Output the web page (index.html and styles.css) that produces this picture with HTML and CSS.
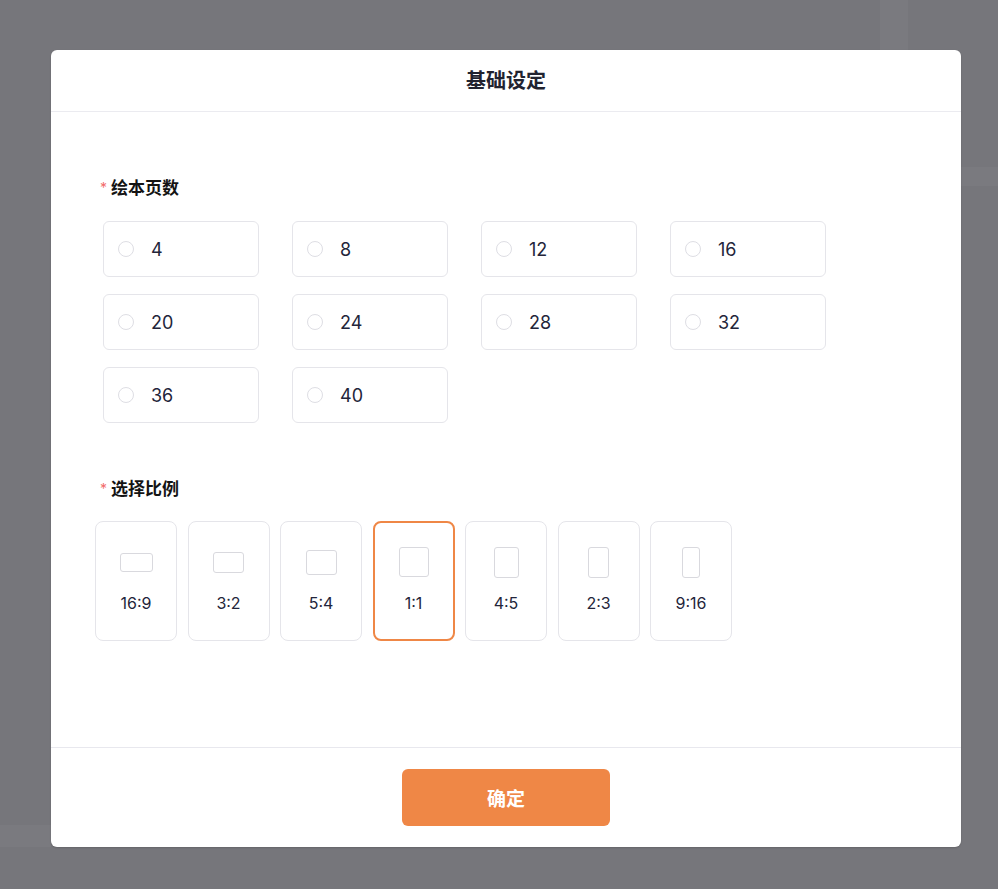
FILE: index.html
```html
<!DOCTYPE html>
<html lang="zh-CN">
<head>
    <meta charset="UTF-8">
    <title>基础设定</title>
    <link rel="stylesheet" href="styles.css">
</head>
<body>
    <div class="backdrop">
        <div class="ghost ghost-top"></div>
        <div class="ghost ghost-side"></div>
        <div class="ghost ghost-bottom"></div>
    </div>

    <div class="mask">
        <div class="dialog">
            <div class="dialog-header">基础设定</div>

            <div class="dialog-body">
                <div class="field">
                    <div class="field-label"><span class="required">*</span>绘本页数</div>
                    <div class="page-options">
                        <label class="page-option"><span class="radio"></span><span class="page-num">4</span></label>
                        <label class="page-option"><span class="radio"></span><span class="page-num">8</span></label>
                        <label class="page-option"><span class="radio"></span><span class="page-num">12</span></label>
                        <label class="page-option"><span class="radio"></span><span class="page-num">16</span></label>
                        <label class="page-option"><span class="radio"></span><span class="page-num">20</span></label>
                        <label class="page-option"><span class="radio"></span><span class="page-num">24</span></label>
                        <label class="page-option"><span class="radio"></span><span class="page-num">28</span></label>
                        <label class="page-option"><span class="radio"></span><span class="page-num">32</span></label>
                        <label class="page-option"><span class="radio"></span><span class="page-num">36</span></label>
                        <label class="page-option"><span class="radio"></span><span class="page-num">40</span></label>
                    </div>
                </div>

                <div class="field field-ratio">
                    <div class="field-label"><span class="required">*</span>选择比例</div>
                    <div class="ratio-options">
                        <div class="ratio-card">
                            <div class="ratio-frame"><span class="ratio-shape r16x9"></span></div>
                            <div class="ratio-text">16:9</div>
                        </div>
                        <div class="ratio-card">
                            <div class="ratio-frame"><span class="ratio-shape r3x2"></span></div>
                            <div class="ratio-text">3:2</div>
                        </div>
                        <div class="ratio-card">
                            <div class="ratio-frame"><span class="ratio-shape r5x4"></span></div>
                            <div class="ratio-text">5:4</div>
                        </div>
                        <div class="ratio-card selected">
                            <div class="ratio-frame"><span class="ratio-shape r1x1"></span></div>
                            <div class="ratio-text">1:1</div>
                        </div>
                        <div class="ratio-card">
                            <div class="ratio-frame"><span class="ratio-shape r4x5"></span></div>
                            <div class="ratio-text">4:5</div>
                        </div>
                        <div class="ratio-card">
                            <div class="ratio-frame"><span class="ratio-shape r2x3"></span></div>
                            <div class="ratio-text">2:3</div>
                        </div>
                        <div class="ratio-card">
                            <div class="ratio-frame"><span class="ratio-shape r9x16"></span></div>
                            <div class="ratio-text">9:16</div>
                        </div>
                    </div>
                </div>
            </div>

            <div class="dialog-footer">
                <button class="confirm-button" type="button">确定</button>
            </div>
        </div>
    </div>
</body>
</html>
```

FILE: styles.css
```css
html, body {
    margin: 0;
    height: 100%;
}
body {
    background: #fff;
    font-family: Inter, "Noto Sans CJK SC", sans-serif;
    color: #1f202c;
}

/* page underneath the mask */
.backdrop {
    position: fixed;
    top: 0;
    left: 0;
    bottom: 0;
    right: 4px;
    background: #76767b;
}
.ghost {
    position: absolute;
    background: #7a7a7f;
}
.ghost-top {
    left: 880px;
    top: 0;
    width: 28px;
    height: 50px;
}
.ghost-side {
    left: 961px;
    right: 0;
    top: 167px;
    height: 19px;
}
.ghost-bottom {
    left: 0;
    top: 825px;
    width: 51px;
    height: 22px;
}

.mask {
    position: fixed;
    top: 0;
    left: 0;
    bottom: 0;
    right: 4px;
    padding: 50px 0 0 51px;
    box-sizing: border-box;
}
.dialog {
    width: 910px;
    background: #fff;
    border-radius: 6px;
    box-shadow: 0 1px 2px rgba(0, 0, 0, 0.15);
}
.dialog-header {
    height: 62px;
    padding-top: 2px;
    box-sizing: border-box;
    line-height: 59px;
    text-align: center;
    font-size: 20px;
    font-weight: 600;
    color: #222330;
    border-bottom: 1px solid #ebebf0;
}

.dialog-body {
    padding: 65px 49px 106px;
}
.field-label {
    font-size: 17px;
    font-weight: 600;
    line-height: 22px;
    color: #141414;
}
.required {
    color: #f26b6b;
    font-size: 14px;
    font-weight: 400;
    margin-right: 4px;
    vertical-align: 1px;
}

.page-options {
    display: grid;
    grid-template-columns: repeat(4, 156px);
    column-gap: 33px;
    row-gap: 17px;
    margin: 22px 0 0 3px;
}
.page-option {
    display: flex;
    align-items: center;
    height: 56px;
    padding-left: 14px;
    border: 1px solid #e5e5ea;
    border-radius: 6px;
    box-sizing: border-box;
    cursor: pointer;
}
.radio {
    width: 16px;
    height: 16px;
    border: 1px solid #dedee4;
    border-radius: 50%;
    box-sizing: border-box;
}
.page-num {
    margin-left: 17px;
    font-size: 18px;
    color: #23253a;
}

.field-ratio {
    margin-top: 55px;
}
.ratio-options {
    display: flex;
    gap: 10.5px;
    margin: 21px 0 0 -5px;
}
.ratio-card {
    width: 82px;
    height: 120px;
    border: 1px solid #e5e5ea;
    border-radius: 8px;
    box-sizing: border-box;
    display: flex;
    flex-direction: column;
    align-items: center;
    padding-top: 24px;
    cursor: pointer;
}
.ratio-card.selected {
    border: 2px solid #ef8746;
    padding-top: 23px;
}
.ratio-frame {
    width: 34px;
    height: 32px;
    display: flex;
    align-items: center;
    justify-content: center;
}
.ratio-shape {
    border: 1.5px solid #d9d9de;
    border-radius: 3px;
    box-sizing: border-box;
}
.r16x9 { width: 33px; height: 19px; }
.r3x2  { width: 31px; height: 21px; }
.r5x4  { width: 31px; height: 25px; }
.r1x1  { width: 30px; height: 30px; }
.r4x5  { width: 25px; height: 31px; }
.r2x3  { width: 21px; height: 31px; }
.r9x16 { width: 18px; height: 31px; }
.ratio-text {
    margin-top: 15px;
    font-size: 16px;
    color: #23253a;
}

.dialog-footer {
    border-top: 1px solid #e8e8ee;
    padding: 21px 0 21px;
    display: flex;
    justify-content: center;
}
.confirm-button {
    width: 208px;
    height: 57px;
    border: none;
    border-radius: 6px;
    background: #ef8746;
    color: #fff;
    font-family: Inter, "Noto Sans CJK SC", sans-serif;
    font-size: 19px;
    font-weight: 600;
    cursor: pointer;
}
```
